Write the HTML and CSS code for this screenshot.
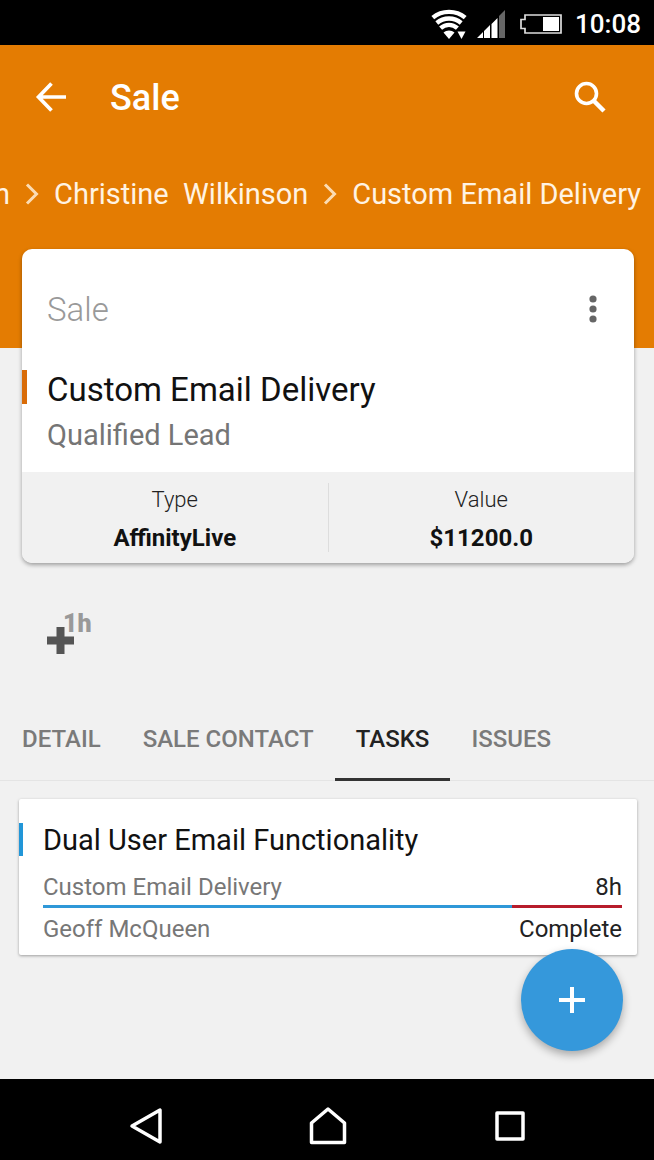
FILE: index.html
```html
<!DOCTYPE html>
<html lang="en">
<head>
<meta charset="utf-8">
<meta name="viewport" content="width=device-width, initial-scale=1">
<title>Sale</title>
<link rel="stylesheet" href="styles.css">
</head>
<body>
<div class="screen">
  <div class="status">
    <svg class="wifi" width="36" height="30" viewBox="0 0 36 30" fill="none" stroke="#fff" stroke-width="4.4">
      <path d="M1.8 8.6C11 .9 25 .9 34.2 8.6"/>
      <path d="M5.8 14c7-6 17.4-6 24.4 0"/>
      <path d="M9.6 19.200c4.9-4.400 11.900-4.400 16.800 0"/>
      <path d="M12.500 23.500c3-2.800 8-2.800 11 0L18 30z" fill="#fff" stroke="none"/>
      <path d="M26.500 22.500h8L30.500 30z" fill="#fff" stroke="none"/>
    </svg>
    <svg class="signal" width="28" height="28" viewBox="0 0 28 28">
      <path d="M0 28l6-6v6zM7 28v-7l6-6v13zM14.500 28V14l6-6v20z" fill="#fff"/>
      <path d="M22 28V6l6-6v28z" fill="#666"/>
    </svg>
    <svg class="battery" width="42" height="20" viewBox="0 0 42 20">
      <path d="M5 1h36v18H5v-4.500H1v-9h4z" fill="none" stroke="#ddd" stroke-width="1.700"/>
      <path d="M23 3h16v14H23z" fill="#fff"/>
    </svg>
    <span>10:08</span>
  </div>

  <header class="header">
    <div class="appbar">
      <button class="icon-btn" aria-label="Back">
        <svg width="32" height="30" viewBox="0 0 32 30" fill="none" stroke="#fff" stroke-width="3.700"><path d="M16.500 1.500L3.500 15l13 13.500M4 15h27"/></svg>
      </button>
      <h1>Sale</h1>
      <button class="icon-btn" aria-label="Search">
        <svg width="32" height="32" viewBox="0 0 32 32" fill="none" stroke="#fff"><circle cx="12.500" cy="12.500" r="10" stroke-width="3.600"/><path d="M19.500 19.500L30 30" stroke-width="4.500"/></svg>
      </button>
    </div>
    <nav class="crumbs" aria-label="Breadcrumb">
      <a href="#">n</a>
      <svg width="14" height="22" viewBox="0 0 14 22"><path d="M2 1.500l9.500 9.500L2 20.500"/></svg>
      <a href="#">Christine  Wilkinson</a>
      <svg width="14" height="22" viewBox="0 0 14 22"><path d="M2 1.500l9.500 9.500L2 20.500"/></svg>
      <a href="#">Custom Email Delivery</a>
    </nav>
  </header>

  <main class="content">
    <section class="sale">
      <div class="sale-top">
        <span class="kind">Sale</span>
        <button class="icon-btn" aria-label="More options">
          <svg width="8" height="28" viewBox="0 0 8 28" fill="#666"><circle cx="4" cy="4" r="3.600"/><circle cx="4" cy="14" r="3.600"/><circle cx="4" cy="24" r="3.600"/></svg>
        </button>
      </div>
      <h2>Custom Email Delivery</h2>
      <p class="stage">Qualified Lead</p>
      <dl class="facts">
        <div><dt>Type</dt><dd>AffinityLive</dd></div>
        <div><dt>Value</dt><dd>$11200.0</dd></div>
      </dl>
    </section>

    <button class="add-time" aria-label="Add 1h">
      <svg width="27" height="27" viewBox="0 0 27 27" fill="#555"><path d="M9.500 0h8v9.500H27v8h-9.500V27h-8v-9.500H0v-8h9.500z"/></svg>
      <span>1h</span>
    </button>

    <nav class="tabs" role="tablist">
      <button role="tab">DETAIL</button>
      <button role="tab">SALE CONTACT</button>
      <button role="tab" class="active" aria-selected="true">TASKS</button>
      <button role="tab">ISSUES</button>
    </nav>

    <article class="task">
      <h3>Dual User Email Functionality</h3>
      <div class="line"><span>Custom Email Delivery</span><b>8h</b></div>
      <div class="bar"><div class="spent" style="width:81%"></div></div>
      <div class="line"><span>Geoff McQueen</span><b>Complete</b></div>
    </article>

    <button class="fab" aria-label="Add">
      <svg width="26" height="26" viewBox="0 0 26 26" stroke="#fff" stroke-width="4"><path d="M13 0v26M0 13h26"/></svg>
    </button>
  </main>

  <footer class="sysnav">
    <button aria-label="Back"><svg width="36" height="38" viewBox="0 0 36 38"><path d="M32 3v32L4 19z"/></svg></button>
    <button aria-label="Home"><svg width="38" height="38" viewBox="0 0 38 38"><path d="M2.500 16L19 2l16.500 14v19.500h-33z"/></svg></button>
    <button aria-label="Recent apps"><svg width="32" height="32" viewBox="0 0 32 32"><path d="M3 3h26v26H3z"/></svg></button>
  </footer>
</div>
</body>
</html>
```

FILE: styles.css
```css
* { box-sizing: border-box; }
body, h1, h2, h3, p, dl, dd { margin: 0; }
body { font-family: Roboto, "Liberation Sans", sans-serif; background: #f1f1f1; color: #111; }
button { border: 0; padding: 0; background: none; font: inherit; color: inherit; cursor: pointer; }
a { color: inherit; text-decoration: none; }
svg { display: block; flex: none; }

.screen { display: flex; flex-direction: column; min-height: 100vh; }

.status {
  display: flex; align-items: center; justify-content: flex-end;
  height: 45px; padding: 2px 13px 0; background: #000; color: #fff;
  font-size: 26px; font-weight: 500;
}
.signal { margin-left: 10px; }
.battery { margin: 0 13px 0 15px; }

.header { height: 303px; background: #e47c02; color: #fff; }
.appbar { display: flex; align-items: center; height: 104px; padding: 0 48px 0 35px; }
.appbar h1 { flex: 1; margin-left: 43px; padding-top: 2px; font-size: 36px; font-weight: 500; }
.icon-btn { display: flex; }

.crumbs {
  display: flex; align-items: center; justify-content: flex-end; gap: 15px;
  height: 90px; padding-right: 13px; overflow: hidden;
  font-size: 29px; white-space: pre; color: #fff3e3;
}
.crumbs svg { fill: none; stroke: #fbdcb4; stroke-width: 3; }

.content { position: relative; flex: 1; margin-top: -99px; }

.sale { margin: 0 20px 0 22px; border-radius: 10px; background: #fff; box-shadow: 0 2px 4px rgba(0,0,0,.35); }
.sale-top { display: flex; justify-content: space-between; align-items: center; padding: 0 37px 2px 25px; height: 121px; }
.kind { padding-top: 2px; font-size: 33px; font-weight: 300; color: #999; }
.sale h2 { padding: 6px 0 0 20px; border-left: 5px solid #d96c08; font-size: 33px; font-weight: 400; line-height: 28px; }
.stage { padding: 13px 25px 19px; font-size: 29px; line-height: 36px; color: #757575; }
.facts { display: flex; padding: 11px 0; border-radius: 0 0 10px 10px; background: #f1f1f1; text-align: center; }
.facts div { flex: 1; height: 69px; }
.facts div + div { border-left: 1px solid #ddd; }
.facts dt { font-size: 22px; font-weight: 300; line-height: 34px; color: #222; }
.facts dd { font-size: 24px; font-weight: 700; line-height: 42px; }

.add-time { display: flex; align-items: flex-end; margin: 50px 0 0 47px; height: 41px; }
.add-time span { align-self: flex-start; margin-left: -11px; font-size: 25px; line-height: 22px; font-weight: 900; color: #999; }

.tabs { display: flex; height: 82px; margin-top: 45px; padding-left: 1px; border-bottom: 1px solid #e4e4e4; }
.tabs button { height: 82px; padding: 0 21px; border-bottom: 3px solid transparent; font-size: 24px; font-weight: 500; color: #7a7a7a; white-space: nowrap; }
.tabs .active { color: #222; border-color: #333; }

.task { margin: 18px 17px 0 19px; padding: 24px 15px 12px 0; border-radius: 2px; background: #fff; box-shadow: 0 1px 3px rgba(0,0,0,.35); }
.task h3 { padding: 2px 0 0 20px; border-left: 4px solid #2196d8; font-size: 29px; font-weight: 400; line-height: 31px; }
.line { display: flex; justify-content: space-between; margin-left: 24px; font-size: 24px; line-height: 28px; color: #777; }
.task h3 + .line { margin-top: 17px; }
.line b { font-weight: 400; color: #222; }
.bar { height: 3px; margin: 4px 0 7px 24px; background: #b71c2b; }
.spent { height: 100%; background: #2f98d8; }

.fab {
  position: absolute; right: 31px; bottom: 28px; width: 102px; height: 102px;
  display: flex; align-items: center; justify-content: center;
  border-radius: 50%; background: #3598db; box-shadow: 0 4px 9px rgba(0,0,0,.3);
}

.sysnav { display: flex; justify-content: center; height: 81px; padding: 12px 53px 0 55px; background: #000; }
.sysnav button { flex: 1; display: flex; align-items: center; justify-content: center; }
.sysnav svg { fill: none; stroke: #fff; stroke-width: 3.500; stroke-linejoin: round; }
```
